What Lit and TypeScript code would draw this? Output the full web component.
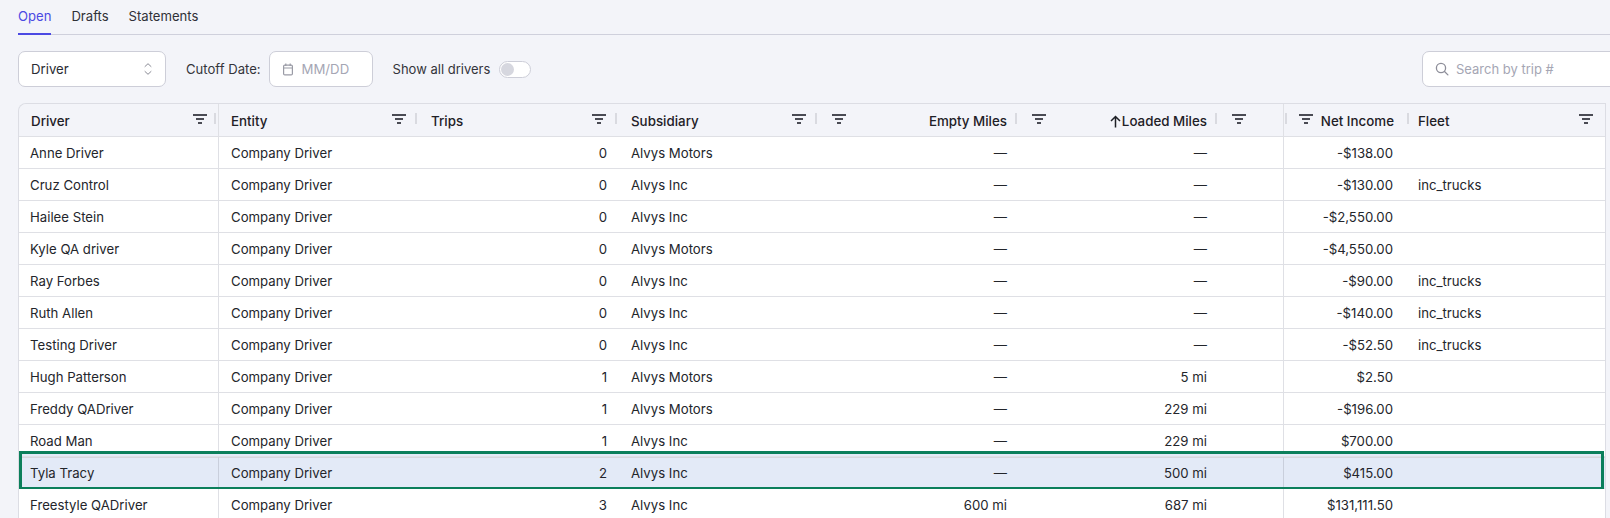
import { LitElement, html, css } from "lit";
import { customElement } from "lit/decorators.js";

const rows: string[][] = [
  ["Anne Driver", "0", "Alvys Motors", "—", "—", "-$138.00", ""],
  ["Cruz Control", "0", "Alvys Inc", "—", "—", "-$130.00", "inc_trucks"],
  ["Hailee Stein", "0", "Alvys Inc", "—", "—", "-$2,550.00", ""],
  ["Kyle QA driver", "0", "Alvys Motors", "—", "—", "-$4,550.00", ""],
  ["Ray Forbes", "0", "Alvys Inc", "—", "—", "-$90.00", "inc_trucks"],
  ["Ruth Allen", "0", "Alvys Inc", "—", "—", "-$140.00", "inc_trucks"],
  ["Testing Driver", "0", "Alvys Inc", "—", "—", "-$52.50", "inc_trucks"],
  ["Hugh Patterson", "1", "Alvys Motors", "—", "5 mi", "$2.50", ""],
  ["Freddy QADriver", "1", "Alvys Motors", "—", "229 mi", "-$196.00", ""],
  ["Road Man", "1", "Alvys Inc", "—", "229 mi", "$700.00", ""],
  ["Tyla Tracy", "2", "Alvys Inc", "—", "500 mi", "$415.00", ""],
  ["Freestyle QADriver", "3", "Alvys Inc", "600 mi", "687 mi", "$131,111.50", ""],
];

const filterIcon = html`<svg class="filter" width="14" height="10" viewBox="0 0 14 10" fill="#4a4b54">
  <rect x="0" y="0" width="14" height="2"></rect><rect x="3" y="4" width="8" height="2"></rect><rect x="5" y="8" width="4" height="2"></rect>
</svg>`;

@customElement("app-root")
export class AppRoot extends LitElement {
  static styles = css`
    :host { display: block; width: 1610px; height: 518px; overflow: hidden; background: #f3f4f9;
      font-family: Inter, "Noto Sans", sans-serif; font-size: 13.2px; color: #23252b; }
    .tabs { display: flex; gap: 20px; height: 35px; box-sizing: border-box; margin-left: 18px; border-bottom: 1px solid #cfd0dc; font-size: 13.1px; }
    .tab { height: 35px; box-sizing: border-box; padding-top: 7px; line-height: 18px; font-weight: 400; color: #2f3037; }
    .tab.active { color: #4b49e3; border-bottom: 2px solid #4b49e3; }
    .toolbar { display: flex; align-items: center; height: 36px; margin: 16px 0 16px 18px; }
    .box { box-sizing: border-box; height: 36px; background: #fff; border: 1px solid #cdced8; border-radius: 7px; display: flex; align-items: center; flex: none; }
    .select { width: 148px; padding: 0 12px; justify-content: space-between; color: #2a2c33; }
    .label { margin-left: 20px; color: #33343b; font-size: 13.1px; }
    .date { width: 104px; margin-left: 8px; padding-left: 12px; gap: 8px; color: #a5a6b4; }
    .toggle-label { margin-left: 20px; color: #33343b; font-size: 13px; }
    .toggle { box-sizing: border-box; width: 32px; height: 17px; margin-left: 9px; border: 1px solid #cdced8; border-radius: 9px; background: #fff; padding: 1px; flex: none; }
    .knob { width: 13px; height: 13px; border-radius: 50%; background: #d6d7df; }
    .search { width: 240px; margin-left: auto; margin-right: -52px; padding-left: 12px; gap: 7px; color: #a5a6b4; font-size: 13px; }
    .table { box-sizing: border-box; width: 1588px; margin-left: 18px; border: 1px solid #dcdde4; border-bottom: none; border-radius: 8px 0 0 0; }
    .row { display: grid; grid-template-columns: 200px 199px 200px 200px 200px 200px 66px 125px 196px; box-sizing: border-box; height: 32px; border-bottom: 1px solid #dfe0e5; background: #fff; position: relative; }
    .row.head { height: 33px; background: #f3f4f9; font-weight: 500; font-size: 13.35px; color: #1e2026; border-radius: 8px 0 0 0; }
    .row.sel { background: #e3eaf7; box-shadow: inset 0 1px #d5d7de; }
    .outline { position: absolute; left: 0; right: 1px; top: -6px; bottom: -2px; border: 3px solid #0b7f5b; pointer-events: none;
      background: linear-gradient(#e3eaf7, #e3eaf7) top / 100% 2px no-repeat; }
    .cell { display: flex; align-items: center; min-width: 0; padding: 0 11px 0 13px; white-space: nowrap; overflow: hidden; }
    .cell.first { padding-left: 11px; border-right: 1px solid #dfe0e5; }
    .cell.second { padding-left: 12px; }
    .cell.r { justify-content: flex-end; }
    .cell.pin { border-right: 1px solid #dfe0e5; }
    .cell.net { padding-right: 16px; }
    .cell.fleet { padding-left: 9px; }
    .sel .cell.first, .sel .cell.pin { border-right-color: #c9cfdc; }
    .head .cell { padding: 2px 0 0; }
    .head .h-l { padding-left: 13px; }
    .head .cell.first, .head .cell.second { padding-left: 12px; }
    .head .h-fleet { padding-left: 9px; }
    .head .cell .grow { flex: 1; }
    .filter { flex: none; display: block; margin-top: -5px; }
    .sep { flex: none; width: 2px; height: 11px; margin: -5px 1px 0 8px; background: #d9dae0; }
    .h-l .filter { margin-right: 1px; }
    .h-l .sep { margin-left: 8px; }
    .h-r > .filter { margin-left: 14px; }
    .first .sep { margin-right: 2px; margin-left: 7px; }
    .h-fleet .filter { margin-right: 12px; }
    .arrow { flex: none; margin-right: 1px; }
    .lead { flex: none; width: 2px; height: 11px; margin: -5px 0 0 1px; background: #d9dae0; }
    .cell.h-net > .filter { margin-left: 12px; }
    .net-sep { margin-right: 0; margin-left: 13px; }
  `;

  private sep() { return html`<span class="sep"></span>`; }

  render() {
    return html`
      <div class="tabs">
        <div class="tab active">Open</div><div class="tab">Drafts</div><div class="tab">Statements</div>
      </div>
      <div class="toolbar">
        <div class="box select"><span>Driver</span>
          <svg width="10" height="14" viewBox="0 0 10 14" fill="none" stroke="#8a8b95" stroke-width="1" stroke-linecap="round" stroke-linejoin="round"><path d="M2 4.5l3-2.8 3 2.8M2 9.5l3 2.8 3-2.8"/></svg>
        </div>
        <span class="label">Cutoff Date:</span>
        <div class="box date">
          <svg width="12" height="13" viewBox="0 0 12 13" fill="none" stroke="#9a9ba6" stroke-width="1.2"><rect x="1.6" y="2.1" width="8.8" height="9.8" rx="1.2"/><path d="M1.6 5h8.8M3.8 .6v2.4M8.2 .6v2.4"/></svg>
          <span>MM/DD</span>
        </div>
        <span class="toggle-label">Show all drivers</span>
        <div class="toggle"><div class="knob"></div></div>
        <div class="box search">
          <svg width="14" height="14" viewBox="0 0 14 14" fill="none" stroke="#8d8e99" stroke-width="1.3" stroke-linecap="round"><circle cx="6" cy="6" r="4.6"/><path d="M9.5 9.5l3.4 3.4"/></svg>
          <span>Search by trip #</span>
        </div>
      </div>
      <div class="table">
        <div class="row head">
          <div class="cell first"><span>Driver</span><span class="grow"></span>${filterIcon}${this.sep()}</div>
          <div class="cell h-l second"><span>Entity</span><span class="grow"></span>${filterIcon}${this.sep()}</div>
          <div class="cell h-l"><span>Trips</span><span class="grow"></span>${filterIcon}${this.sep()}</div>
          <div class="cell h-l"><span>Subsidiary</span><span class="grow"></span>${filterIcon}${this.sep()}</div>
          <div class="cell h-r">${filterIcon}<span class="grow"></span><span>Empty Miles</span>${this.sep()}</div>
          <div class="cell h-r">${filterIcon}<span class="grow"></span>
            <svg class="arrow" width="11" height="13" viewBox="0 0 11 13" fill="none" stroke="#1e2026" stroke-width="1.5"><path d="M5.5 12.5V1.5M1 6L5.5 1.5 10 6"/></svg>
            <span>Loaded Miles</span>${this.sep()}</div>
          <div class="cell h-r pin">${filterIcon}</div>
          <div class="cell h-net"><span class="lead"></span>${filterIcon}<span class="grow"></span><span>Net Income</span><span class="sep net-sep"></span></div>
          <div class="cell h-fleet"><span>Fleet</span><span class="grow"></span>${filterIcon}</div>
        </div>
        ${rows.map((r) => {
          const sel = r[0] === "Tyla Tracy";
          return html`<div class="row ${sel ? "sel" : ""}">
            <div class="cell first">${r[0]}</div>
            <div class="cell second">Company Driver</div>
            <div class="cell r">${r[1]}</div>
            <div class="cell">${r[2]}</div>
            <div class="cell r">${r[3]}</div>
            <div class="cell r">${r[4]}</div>
            <div class="cell pin"></div>
            <div class="cell r net">${r[5]}</div>
            <div class="cell fleet">${r[6]}</div>
            ${sel ? html`<div class="outline"></div>` : ""}
          </div>`;
        })}
      </div>
    `;
  }
}
